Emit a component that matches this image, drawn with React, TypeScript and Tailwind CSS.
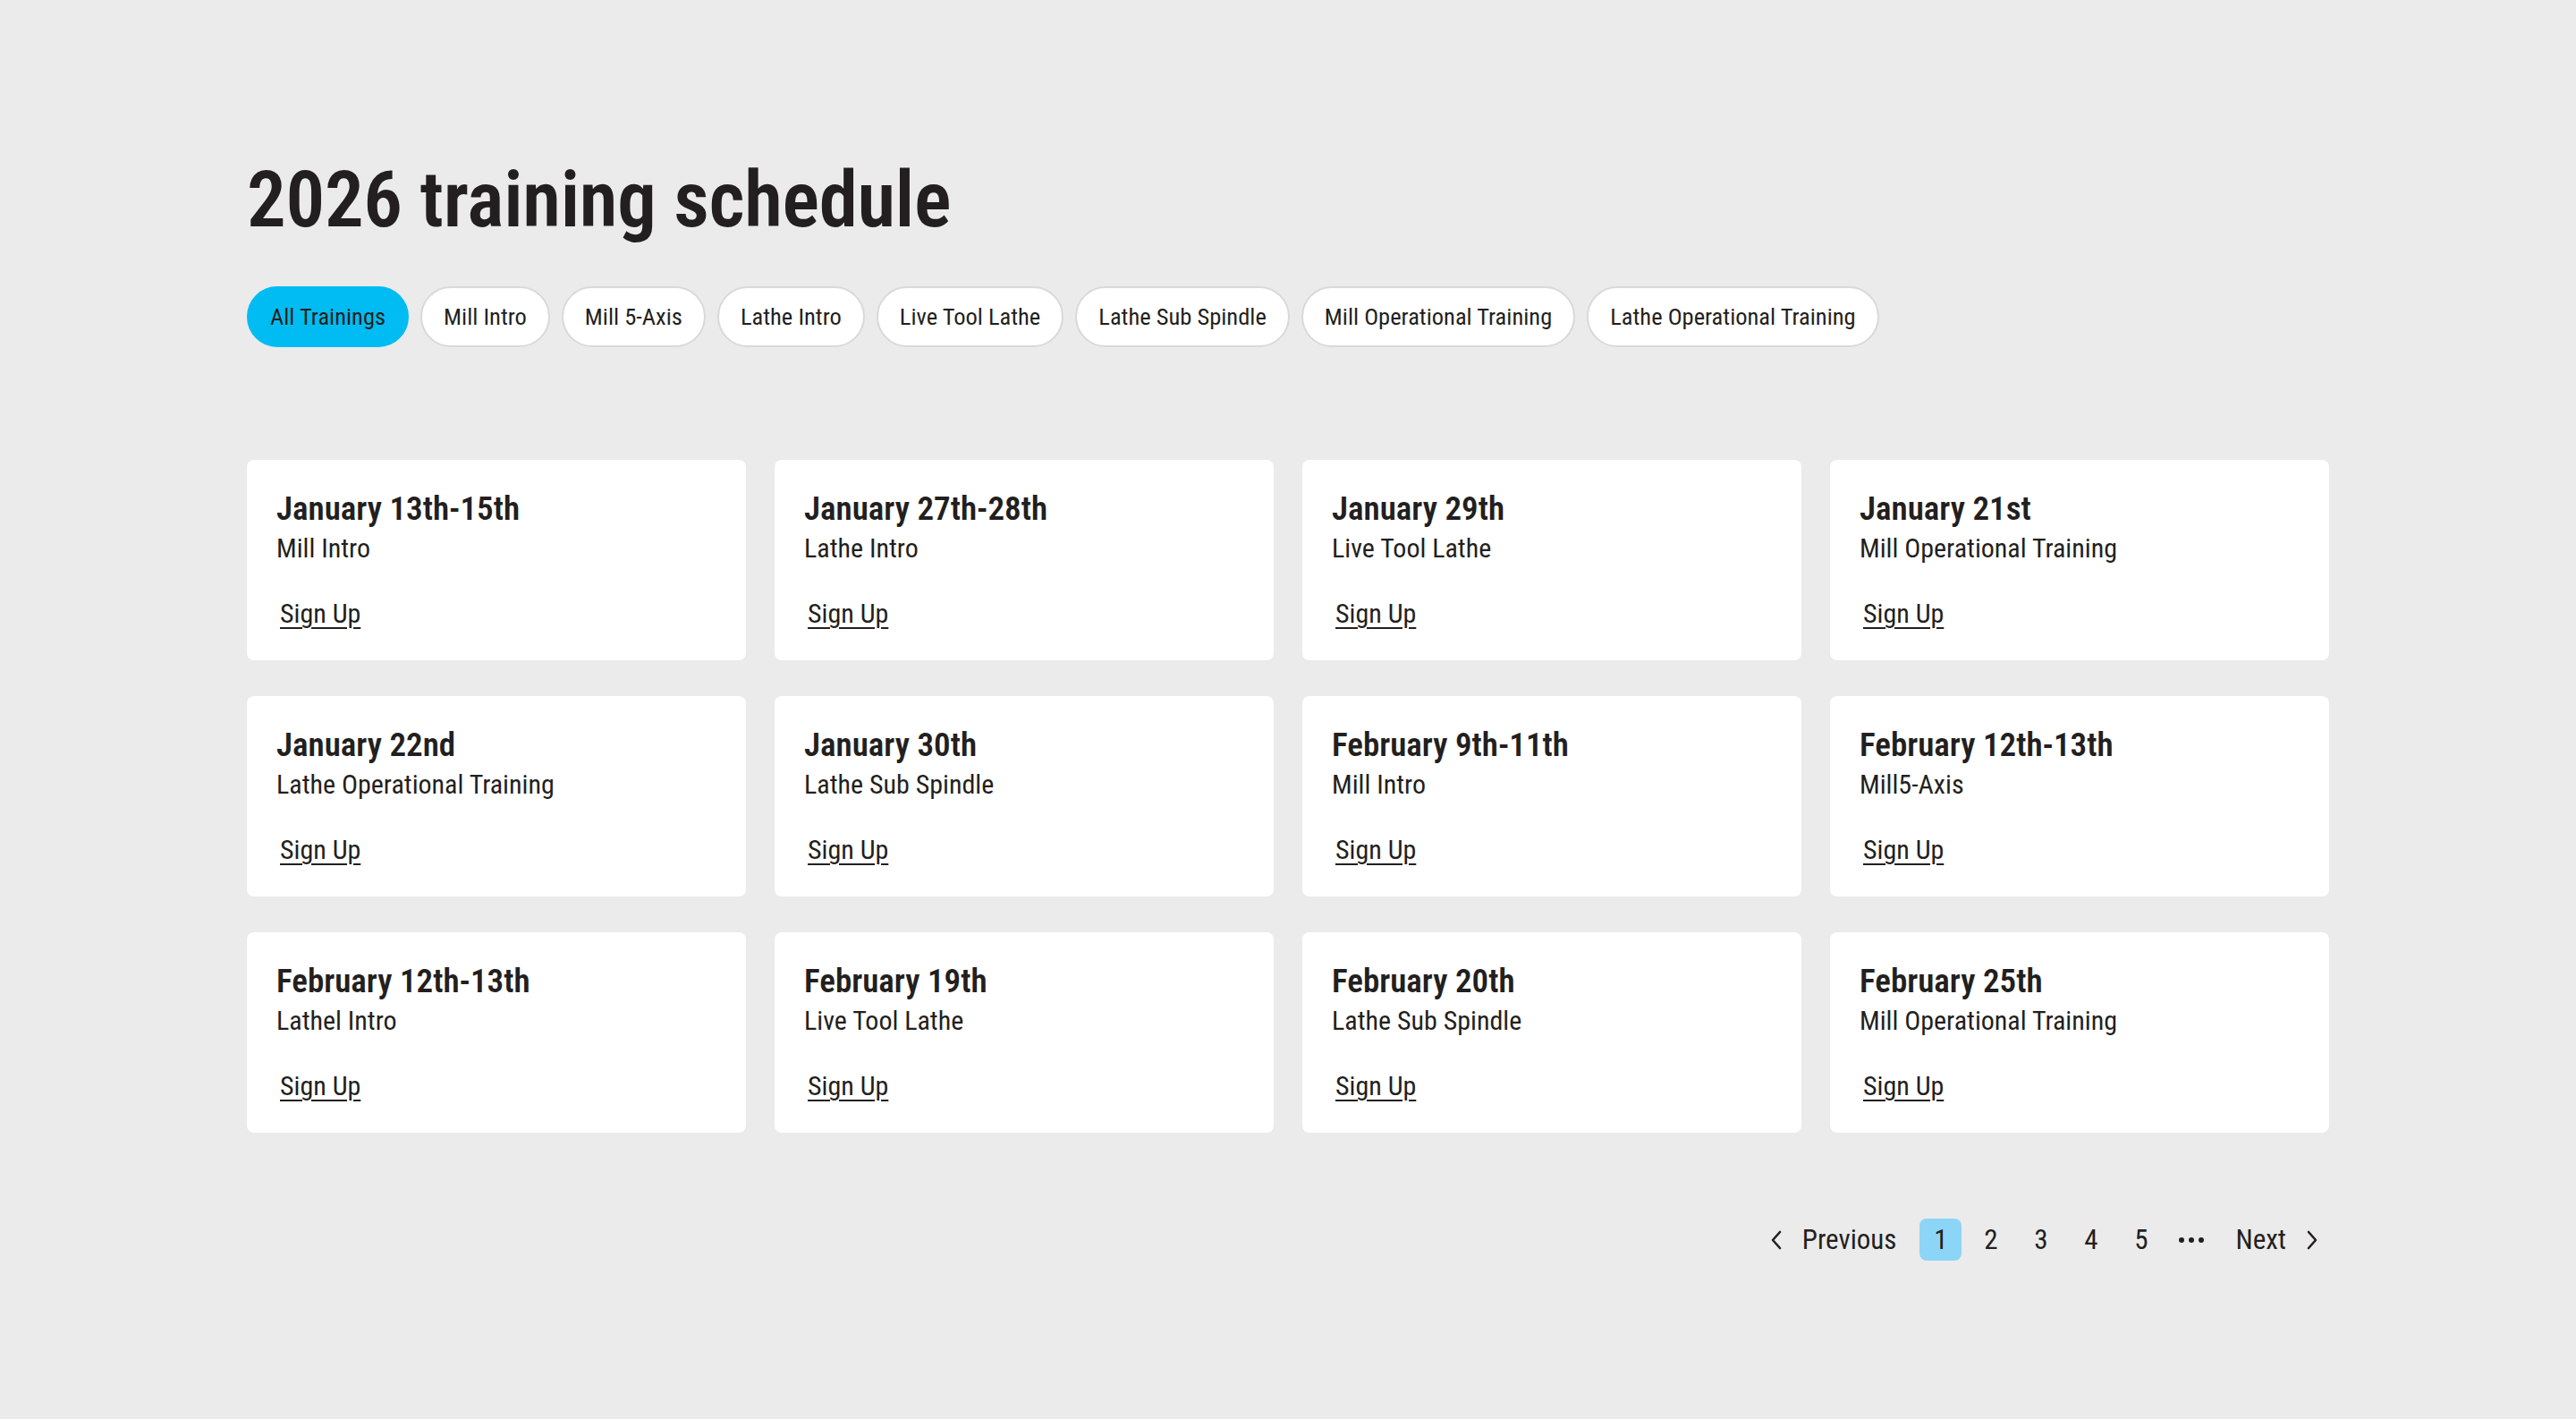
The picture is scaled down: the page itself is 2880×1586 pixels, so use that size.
const filters = [
  'All Trainings',
  'Mill Intro',
  'Mill 5-Axis',
  'Lathe Intro',
  'Live Tool Lathe',
  'Lathe Sub Spindle',
  'Mill Operational Training',
  'Lathe Operational Training',
];

const sessions = [
  { date: 'January 13th-15th', course: 'Mill Intro' },
  { date: 'January 27th-28th', course: 'Lathe Intro' },
  { date: 'January 29th', course: 'Live Tool Lathe' },
  { date: 'January 21st', course: 'Mill Operational Training' },
  { date: 'January 22nd', course: 'Lathe Operational Training' },
  { date: 'January 30th', course: 'Lathe Sub Spindle' },
  { date: 'February 9th-11th', course: 'Mill Intro' },
  { date: 'February 12th-13th', course: 'Mill5-Axis' },
  { date: 'February 12th-13th', course: 'Lathel Intro' },
  { date: 'February 19th', course: 'Live Tool Lathe' },
  { date: 'February 20th', course: 'Lathe Sub Spindle' },
  { date: 'February 25th', course: 'Mill Operational Training' },
];

function Chevron({ dir }: { dir: 'left' | 'right' }) {
  return (
    <svg width="14" height="22" viewBox="0 0 14 22" fill="none" stroke="#231f20" strokeWidth="2.6" strokeLinecap="round" strokeLinejoin="round">
      {dir === 'left' ? <polyline points="11,2 3,11 11,20" /> : <polyline points="3,2 11,11 3,20" />}
    </svg>
  );
}

export default function App() {
  const active = 'All Trainings';

  return (
    <div className="min-h-screen bg-[#ebebeb] text-[#231f20] font-['Roboto_Condensed','Open_Sans',sans-serif]">
      <div className="w-[2328px] mx-auto pt-[180px] pb-20">
        <h1 className="text-[87px] leading-none font-semibold tracking-[-0.3px]">2026 training schedule</h1>

        {/* filters */}
        <div className="flex gap-[13px] mt-[53px]">
          {filters.map((f) => (
            <button
              key={f}
              className={
                f === active
                  ? 'h-[68px] px-[24px] rounded-full bg-[#00bcf2] border-2 border-[#00bcf2] text-[26.5px] leading-none'
                  : 'h-[68px] px-[24px] rounded-full bg-white border-2 border-[#d9d9d9] text-[26.5px] leading-none'
              }
            >
              {f}
            </button>
          ))}
        </div>

        {/* cards */}
        <div className="grid grid-cols-4 gap-x-[32px] gap-y-[40px] mt-[126px]">
          {sessions.map((s, i) => (
            <div key={i} className="h-[224px] bg-white rounded-lg pl-[33px] pt-[36px]">
              <div className="text-[37px] leading-none font-semibold">{s.date}</div>
              <div className="text-[30px] leading-none mt-[11px]">{s.course}</div>
              <a href="#" className="inline-block ml-[4px] mt-[43px] text-[30px] leading-none underline decoration-[1.5px] underline-offset-[5px]">
                Sign Up
              </a>
            </div>
          ))}
        </div>

        {/* pagination */}
        <div className="flex justify-end items-center mt-[96px] pr-[12px] text-[31px] leading-none">
          <button className="flex items-center gap-[22px]">
            <Chevron dir="left" />
            <span>Previous</span>
          </button>
          <div className="flex items-center gap-[9px] mx-[26px]">
            {['1', '2', '3', '4', '5'].map((n) => (
              <button
                key={n}
                className={
                  n === '1'
                    ? 'w-[47px] h-[47px] rounded-lg bg-[#8dd5f6] flex items-center justify-center'
                    : 'w-[47px] h-[47px] rounded-lg flex items-center justify-center'
                }
              >
                {n}
              </button>
            ))}
            <div className="w-[47px] h-[47px] flex items-center justify-center gap-[5px]">
              <span className="w-[6px] h-[6px] rounded-full bg-[#231f20]" />
              <span className="w-[6px] h-[6px] rounded-full bg-[#231f20]" />
              <span className="w-[6px] h-[6px] rounded-full bg-[#231f20]" />
            </div>
          </div>
          <button className="flex items-center gap-[22px]">
            <span>Next</span>
            <Chevron dir="right" />
          </button>
        </div>
      </div>
    </div>
  );
}
